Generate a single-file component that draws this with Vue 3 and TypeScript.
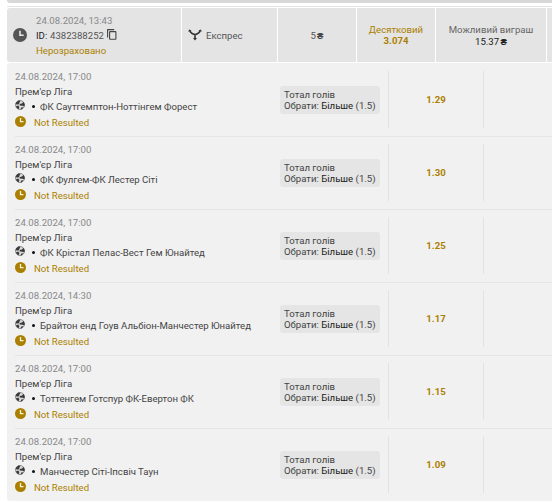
<script setup lang="ts">
interface Leg {
  date: string
  match: string
  odds: string
}

const legs: Leg[] = [
  { date: '24.08.2024, 17:00', match: 'ФК Саутгемптон-Ноттінгем Форест', odds: '1.29' },
  { date: '24.08.2024, 17:00', match: 'ФК Фулгем-ФК Лестер Сіті', odds: '1.30' },
  { date: '24.08.2024, 17:00', match: 'ФК Крістал Пелас-Вест Гем Юнайтед', odds: '1.25' },
  { date: '24.08.2024, 14:30', match: 'Брайтон енд Гоув Альбіон-Манчестер Юнайтед', odds: '1.17' },
  { date: '24.08.2024, 17:00', match: 'Тоттенгем Готспур ФК-Евертон ФК', odds: '1.15' },
  { date: '24.08.2024, 17:00', match: 'Манчестер Сіті-Іпсвіч Таун', odds: '1.09' },
]
</script>

<template>
  <main class="history">
    <div class="previous"></div>
    <div class="divider"></div>
    <header class="summary">
      <div class="cell ticket">
        <svg class="clock-large" viewBox="0 0 14 14">
          <circle cx="7" cy="7" r="7" fill="#555" />
          <path d="M7 2.8V7.2H10.7" fill="none" stroke="#e8e8e8" stroke-width="1.6" />
        </svg>
        <div class="ticket-text">
          <div class="muted">24.08.2024, 13:43</div>
          <div class="id-line">
            <span class="id-label">ID:</span>
            <span class="id-value">4382388252</span>
            <svg class="copy" viewBox="0 0 10 11">
              <path d="M.6 8.4V.6H7.2" fill="none" stroke="#444" stroke-width="1.1" />
              <rect x="2.6" y="2.6" width="6.3" height="7.6" rx=".5" fill="none" stroke="#444" stroke-width="1.1" />
            </svg>
          </div>
          <div class="gold">Нерозраховано</div>
        </div>
      </div>
      <div class="cell kind">
        <svg class="fork" viewBox="0 0 14 12">
          <path d="M1.8 1.6C2.6 4.2 4.4 5.2 7 5.6C9.6 5.2 11.4 4.2 12.2 1.6M7 5.6V10" fill="none" stroke="#333" stroke-width="1.6" />
          <path d="M.2 2.8L1.1.4 3.6 1.5ZM13.8 2.8L12.9.4 10.4 1.5ZM5 9H9L7 11.6Z" fill="#333" />
        </svg>
        <span>Експрес</span>
      </div>
      <div class="cell stake">5 <b class="currency">₴</b></div>
      <div class="cell stacked gold">
        <span>Десятковий</span>
        <b>3.074</b>
      </div>
      <div class="cell stacked payout">
        <span>Можливий виграш</span>
        <span class="amount">15.37 <b class="currency">₴</b></span>
      </div>
      <div class="cell"></div>
    </header>
    <section class="legs">
      <article v-for="(leg, index) in legs" :key="index" class="leg">
        <div class="event">
          <div class="muted">{{ leg.date }}</div>
          <div class="league">Прем'єр Ліга</div>
          <div class="match">
            <svg class="ball" viewBox="0 0 10 10">
              <circle cx="5" cy="5" r="4.5" fill="#dcdcdc" stroke="#777" stroke-width=".8" />
              <path d="M1.2 2.2L3.4.5 5.4.8 4.4 2.8 4.2 4.2 2.6 4.6.5 4.2ZM8.6 1.8L9.7 4.4 9.3 6.4 7.6 5.8 4.6 5.6 4.8 4 7 3.6ZM1 6.2L3.2 5.4 4.4 7 3.6 9.2 1.9 8.3ZM6.2 7.4L8.4 7.2 6.9 9.2 5.6 9.4Z" fill="#3a3a3a" />
            </svg>
            <i class="dot"></i>
            <span>{{ leg.match }}</span>
          </div>
          <div class="status">
            <svg class="clock" viewBox="0 0 11 11">
              <circle cx="5.5" cy="5.5" r="5.5" fill="#ab8000" />
              <path d="M5.5 2.1V5.7H8.5" fill="none" stroke="#f5f0df" stroke-width="1.3" />
            </svg>
            <span>Not Resulted</span>
          </div>
        </div>
        <div class="market">
          <div class="pick">
            <div>Тотал голів</div>
            <div>Обрати: <span class="choice">Більше</span> (1.5)</div>
          </div>
        </div>
        <div class="odds">{{ leg.odds }}</div>
        <div class="rest"></div>
      </article>
    </section>
  </main>
</template>

<style>
body {
  background: #fff;
  overflow: hidden;
}
</style>

<style scoped>
.history {
  box-sizing: border-box;
  width: 552px;
  height: 504px;
  padding-left: 7px;
  background: #fff;
  color: #444;
  font: 9.6px/15px Roboto, sans-serif;
  white-space: nowrap;
}
svg {
  display: block;
  flex: none;
}
.previous {
  height: 3px;
  background: #d8d8d8;
  border-radius: 0 0 0 3px;
}
.divider {
  height: 1px;
  margin: 3px 0 1px;
  background: #e4e4e4;
}
.summary {
  display: grid;
  grid-template-columns: 174px 95px 78px 78px 110px 5px;
  gap: 1px;
  height: 54px;
}
.cell {
  display: flex;
  align-items: center;
  background: #e4e4e4;
}
.cell:first-child {
  border-radius: 3px 0 0 3px;
}
.ticket-text {
  margin-left: 9px;
}
.clock-large {
  width: 14px;
  height: 14px;
  margin-left: 6px;
}
.muted {
  color: #888;
}
.id-line {
  display: flex;
}
.id-label {
  width: 14px;
  color: #222;
}
.id-value {
  color: #555;
}
.copy {
  width: 10px;
  height: 11px;
  margin: 1px 0 0 3px;
}
.gold,
.status {
  color: #ab8000;
}
.kind {
  box-sizing: border-box;
  padding-top: 1px;
  color: #555;
}
.fork {
  width: 14px;
  height: 12px;
  margin: 0 4px 2px 6px;
}
.stake {
  box-sizing: border-box;
  padding-top: 1px;
  justify-content: center;
  gap: 1px;
  color: #555;
}
.currency {
  color: #222;
  font-size: 9.6px;
}
.stake .currency {
  color: #444;
}
.stacked {
  flex-direction: column;
  justify-content: center;
  line-height: 11px;
}
.payout {
  box-sizing: border-box;
  padding-top: 1px;
  color: #666;
}
.amount {
  margin-top: 1px;
  color: #222;
  word-spacing: -1px;
}
.legs {
  height: 438px;
  margin-top: 1px;
  background: #f1f1f1;
  border-radius: 3px 0 0 3px;
}
.leg {
  display: grid;
  grid-template-columns: 265px 108px 95px 69px;
  box-sizing: border-box;
  height: 73px;
  margin-left: 8px;
  border-bottom: 1px solid #e5e5e5;
}
.leg:first-child {
  height: 74px;
  padding-top: 1px;
}
.leg:last-child {
  border-bottom: 0;
}
.event {
  padding-top: 5px;
}
.match,
.status {
  display: flex;
  height: 16px;
}
.ball {
  width: 10px;
  height: 10px;
  margin-top: 1px;
}
.dot {
  width: 3px;
  height: 3px;
  margin: 6px 5px 0 7px;
  border-radius: 50%;
  background: #111;
}
.clock {
  width: 11px;
  height: 11px;
  margin: 1px 8px 0 0;
}
.pick {
  box-sizing: border-box;
  width: 100px;
  height: 28px;
  margin-top: 22px;
  padding: 3px 4px;
  border-radius: 3px;
  background: #e5e5e5;
  line-height: 11px;
}
.choice {
  color: #222;
}
.odds,
.rest {
  box-sizing: border-box;
  height: 57px;
  margin-top: 7px;
  border-left: 1px solid #e3e3e3;
}
.odds {
  color: #ab8000;
  font-weight: 700;
  line-height: 57px;
  text-align: center;
}
</style>
